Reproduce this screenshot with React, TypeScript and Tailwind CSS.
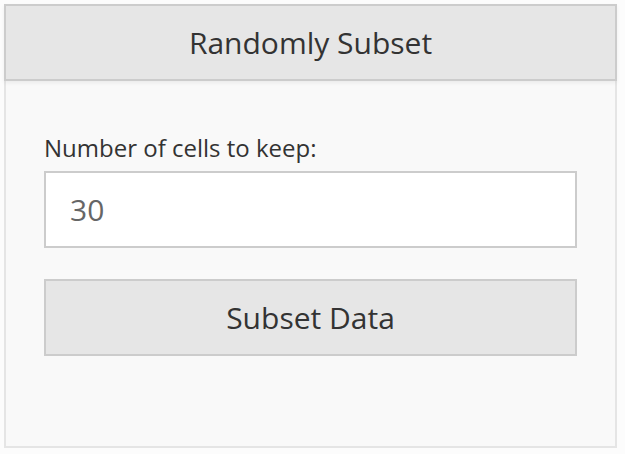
import React, { useState } from "react";

const App: React.FC = () => {
  const [count, setCount] = useState("30");

  return (
    <div className="min-h-screen bg-[#fcfcfc] pt-[4px] pl-[4px] font-['Open_Sans',sans-serif] text-[#333]">
      <div className="w-[613px]">
        {/* Header */}
        <div className="relative z-10 flex h-[77px] items-center justify-center border-2 border-[#cccccc] bg-[#e6e6e6] shadow-[0_2px_4px_rgba(0,0,0,0.06)]">
          <h2 className="text-[30px]">Randomly Subset</h2>
        </div>

        {/* Body */}
        <div className="flex h-[367px] flex-col border-2 border-t-0 border-[#e5e5e5] bg-[#f9f9f9] px-[38px] pt-[52px]">
          <label className="mb-[9px] text-[24px] leading-[29px]">
            Number of cells to keep:
          </label>

          <input
            type="number"
            value={count}
            onChange={(e) => setCount(e.target.value)}
            className="h-[77px] w-full border-2 border-[#cccccc] bg-white px-[24px] text-[30px] text-[#666] outline-none"
          />

          <button className="mt-[31px] h-[77px] w-full border-2 border-[#cccccc] bg-[#e6e6e6] text-[30px] text-[#333]">
            Subset Data
          </button>
        </div>
      </div>
    </div>
  );
};

export default App;
